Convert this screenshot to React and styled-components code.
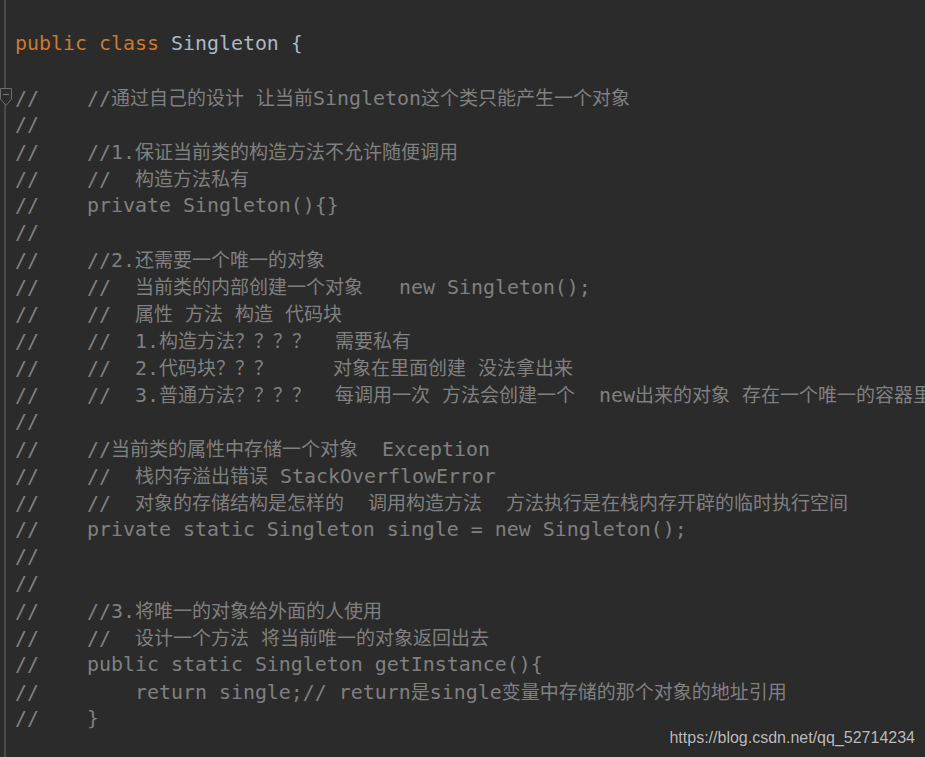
import React from 'react'
import styled, { createGlobalStyle } from 'styled-components'

const GlobalStyles = createGlobalStyle`
  * {
    margin: 0;
    padding: 0;
    box-sizing: border-box;
  }
  body {
    background: #2b2b2b;
    overflow: hidden;
  }
`

const theme = {
  bg: '#2b2b2b',
  gutterLine: '#4a4a4a',
  keyword: '#cc7832',
  ident: '#a9b7c6',
  comment: '#808080',
  fold: '#6e6e6e',
}

const Editor = styled.div`
  position: relative;
  width: 925px;
  height: 757px;
  overflow: hidden;
  padding-top: 30px;
  background: linear-gradient(
      to right,
      transparent 4px,
      ${theme.gutterLine} 4px,
      ${theme.gutterLine} 6px,
      transparent 6px
    )
    ${theme.bg};
  font-family: 'DejaVu Sans Mono', 'Noto Sans CJK SC', monospace;
  font-size: 19.93px;
`

const Row = styled.div`
  display: flex;
  align-items: center;
  height: 27px;
`

const Gutter = styled.div`
  flex: none;
  width: 15px;
  height: 27px;
  display: flex;
  align-items: center;
`

const Code = styled.div`
  white-space: pre;
  line-height: 27px;
`

const Token = styled.span`
  color: ${p => theme[p.$kind] || theme.comment};
`

// CJK glyphs in the IDE are a bit narrower than two columns
const Cjk = styled.span`
  font-family: 'Noto Sans CJK SC', sans-serif;
  font-size: 19px;
`

const Watermark = styled.div`
  position: absolute;
  right: 10px;
  bottom: 10px;
  font-family: 'Liberation Sans', Arial, sans-serif;
  font-size: 16px;
  color: #bdbdbd;
  text-shadow: 0 0 1px rgba(0, 0, 0, 0.4);
`

const FoldMarker = () => (
  <svg width="13" height="20" viewBox="0 0 13 20">
    <path d="M0.5 0.5 H11.5 V11 L6 17.5 L0.5 11 Z" fill={theme.bg} stroke={theme.fold} strokeWidth="1" />
    <path d="M3 6.5 H9" stroke={theme.fold} strokeWidth="1.2" />
  </svg>
)

const c = text => [['comment', text]]

const lines = [
  [['keyword', 'public class '], ['ident', 'Singleton {']],
  [],
  { fold: true, tokens: c('//    //通过自己的设计 让当前Singleton这个类只能产生一个对象') },
  c('//'),
  c('//    //1.保证当前类的构造方法不允许随便调用'),
  c('//    //  构造方法私有'),
  c('//    private Singleton(){}'),
  c('//'),
  c('//    //2.还需要一个唯一的对象'),
  c('//    //  当前类的内部创建一个对象   new Singleton();'),
  c('//    //  属性 方法 构造 代码块'),
  c('//    //  1.构造方法？？？？  需要私有'),
  c('//    //  2.代码块？？？     对象在里面创建 没法拿出来'),
  c('//    //  3.普通方法？？？？  每调用一次 方法会创建一个  new出来的对象 存在一个唯一的容器里'),
  c('//'),
  c('//    //当前类的属性中存储一个对象  Exception'),
  c('//    //  栈内存溢出错误 StackOverflowError'),
  c('//    //  对象的存储结构是怎样的  调用构造方法  方法执行是在栈内存开辟的临时执行空间'),
  c('//    private static Singleton single = new Singleton();'),
  c('//'),
  c('//'),
  c('//    //3.将唯一的对象给外面的人使用'),
  c('//    //  设计一个方法 将当前唯一的对象返回出去'),
  c('//    public static Singleton getInstance(){'),
  c('//        return single;// return是single变量中存储的那个对象的地址引用'),
  c('//    }'),
]

const splitCjk = text =>
  text.split(/([\u3000-\u9fff\uff00-\uffef]+)/).map((part, i) =>
    /[\u3000-\u9fff\uff00-\uffef]/.test(part) ? <Cjk key={i}>{part}</Cjk> : part
  )

const App = () => (
  <Editor>
    <GlobalStyles />
    {lines.map((line, i) => {
      const tokens = Array.isArray(line) ? line : line.tokens
      return (
        <Row key={i}>
          <Gutter>{line.fold && <FoldMarker />}</Gutter>
          <Code>
            {tokens.map(([kind, text], j) => (
              <Token key={j} $kind={kind}>{splitCjk(text)}</Token>
            ))}
          </Code>
        </Row>
      )
    })}
    <Watermark>https://blog.csdn.net/qq_52714234</Watermark>
  </Editor>
)

export default App
